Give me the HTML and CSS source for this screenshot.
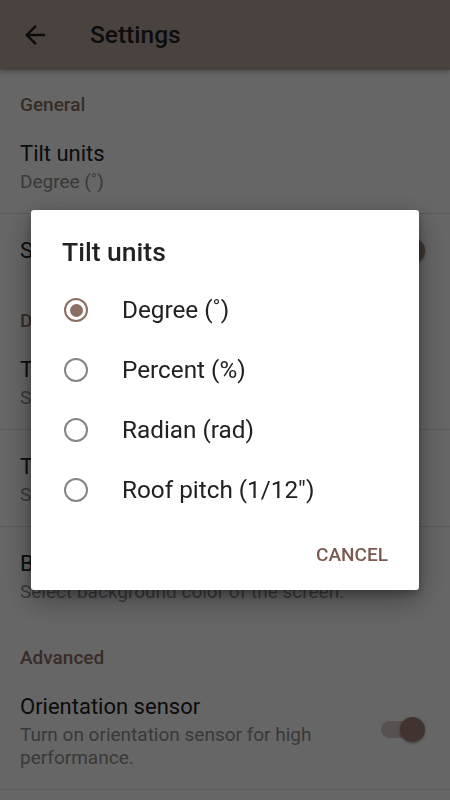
FILE: index.html
```html
<!DOCTYPE html>
<html lang="en">
<head>
<meta charset="utf-8">
<title>Settings</title>
<link rel="stylesheet" href="styles.css">
</head>
<body>
<div class="app">
  <header class="toolbar">
    <svg class="back" viewBox="0 0 24 24" width="30" height="30" aria-hidden="true"><path d="M20 11H7.83l5.59-5.59L12 4l-8 8 8 8 1.41-1.41L7.83 13H20v-2z"/></svg>
    <h1 class="toolbar-title">Settings</h1>
  </header>
  <main class="prefs">
    <div class="cat">General</div>
    <div class="pref sep">
      <div class="pref-text">
        <div class="pref-title">Tilt units</div>
        <div class="pref-sum">Degree (˚)</div>
      </div>
    </div>
    <div class="pref single">
      <div class="pref-text">
        <div class="pref-title">Screen always on</div>
      </div>
      <div class="switch on"><span class="track"></span><span class="knob"></span></div>
    </div>

    <div class="cat">Display</div>
    <div class="pref sep">
      <div class="pref-text">
        <div class="pref-title">Theme</div>
        <div class="pref-sum">Select theme of the app.</div>
      </div>
    </div>
    <div class="pref sep">
      <div class="pref-text">
        <div class="pref-title">Text color</div>
        <div class="pref-sum">Select text color of the screen.</div>
      </div>
    </div>
    <div class="pref">
      <div class="pref-text">
        <div class="pref-title">Background color</div>
        <div class="pref-sum">Select background color of the screen.</div>
      </div>
    </div>

    <div class="cat">Advanced</div>
    <div class="pref sep">
      <div class="pref-text">
        <div class="pref-title">Orientation sensor</div>
        <div class="pref-sum">Turn on orientation sensor for high performance.</div>
      </div>
      <div class="switch on"><span class="track"></span><span class="knob"></span></div>
    </div>
  </main>
</div>

<div class="scrim"></div>

<div class="dialog" role="dialog">
  <h2 class="dlg-title">Tilt units</h2>
  <ul class="options">
    <li class="option checked"><span class="radio"></span><span class="opt-label">Degree (˚)</span></li>
    <li class="option"><span class="radio"></span><span class="opt-label">Percent (%)</span></li>
    <li class="option"><span class="radio"></span><span class="opt-label">Radian (rad)</span></li>
    <li class="option"><span class="radio"></span><span class="opt-label">Roof pitch (1/12")</span></li>
  </ul>
  <div class="dlg-actions">
    <button class="btn-text" type="button">CANCEL</button>
  </div>
</div>
</body>
</html>
```

FILE: styles.css
```css
* { box-sizing: border-box; }

html, body {
  margin: 0;
  padding: 0;
  background: #ffffff;
  font-family: Roboto, "Noto Sans", "Liberation Sans", sans-serif;
  color: #212121;
}

.app {
  width: 450px;
  height: 800px;
  overflow: hidden;
}

.toolbar {
  height: 70px;
  background: #b9a59f;
  display: flex;
  align-items: center;
  padding-left: 20px;
  box-shadow: 0 2px 4px rgba(0,0,0,0.25);
  position: relative;
  z-index: 1;
}

.back {
  fill: #1f1f1f;
  flex: none;
}

.toolbar-title {
  margin: 0 0 0 40px;
  font-size: 24.5px;
  font-weight: 500;
  color: #222;
  line-height: 30px;
}

.prefs {
  display: flex;
  flex-direction: column;
}

.cat {
  padding: 24px 20px 1px;
  font-size: 19px;
  line-height: 22px;
  font-weight: 500;
  color: #8d6e63;
}

.pref {
  display: flex;
  align-items: center;
  padding: 20px 25px 20px 20px;
}

.pref.single {
  padding-bottom: 19px;
}

.pref.sep {
  border-bottom: 1px solid #e2e2e2;
}

.pref-text {
  flex: 1;
  min-width: 0;
}

.pref-title {
  font-size: 22px;
  line-height: 33px;
  color: #212121;
}

.pref-sum {
  font-size: 19px;
  line-height: 23px;
  color: #8f8f8f;
}

.switch {
  flex: none;
  width: 50px;
  height: 26px;
  margin-left: 16px;
  display: flex;
  align-items: center;
  justify-content: flex-end;
  position: relative;
}

.switch .track {
  width: 42px;
  height: 17px;
  border-radius: 9px;
  background: #d9cbc6;
  margin-right: 2px;
}

.switch .knob {
  position: absolute;
  right: 0;
  top: 0;
  width: 25px;
  height: 25px;
  border-radius: 50%;
  background: #a38379;
  box-shadow: 0 1px 3px rgba(0,0,0,0.4);
}

.scrim {
  position: fixed;
  inset: 0;
  z-index: 10;
  background: rgba(0,0,0,0.6);
}

.dialog {
  position: fixed;
  z-index: 11;
  left: 50%;
  top: 50%;
  transform: translate(-50%, -50%);
  width: 388px;
  background: #ffffff;
  border-radius: 3px;
  box-shadow: 0 10px 30px rgba(0,0,0,0.35), 0 4px 10px rgba(0,0,0,0.25);
}

.dlg-title {
  margin: 0;
  padding: 26px 31px 12px;
  font-size: 26.5px;
  line-height: 32px;
  font-weight: 500;
  color: #212121;
}

.options {
  list-style: none;
  margin: 0;
  padding: 0;
}

.option {
  height: 60px;
  display: flex;
  align-items: center;
  padding-left: 33px;
}

.radio {
  flex: none;
  width: 24px;
  height: 24px;
  border-radius: 50%;
  border: 2.5px solid #858585;
  display: flex;
  align-items: center;
  justify-content: center;
}

.option.checked .radio {
  border-color: #8d6e63;
}

.option.checked .radio::after {
  content: "";
  width: 13px;
  height: 13px;
  border-radius: 50%;
  background: #8d6e63;
}

.opt-label {
  margin-left: 34px;
  font-size: 24.3px;
  line-height: 30px;
  color: #212121;
}

.dlg-actions {
  height: 70px;
  display: flex;
  align-items: center;
  justify-content: flex-end;
  padding-right: 23px;
}

.btn-text {
  border: 0;
  background: transparent;
  font-family: inherit;
  font-size: 19px;
  font-weight: 500;
  color: #7b5a4f;
  padding: 8px;
  line-height: 22px;
}
```
